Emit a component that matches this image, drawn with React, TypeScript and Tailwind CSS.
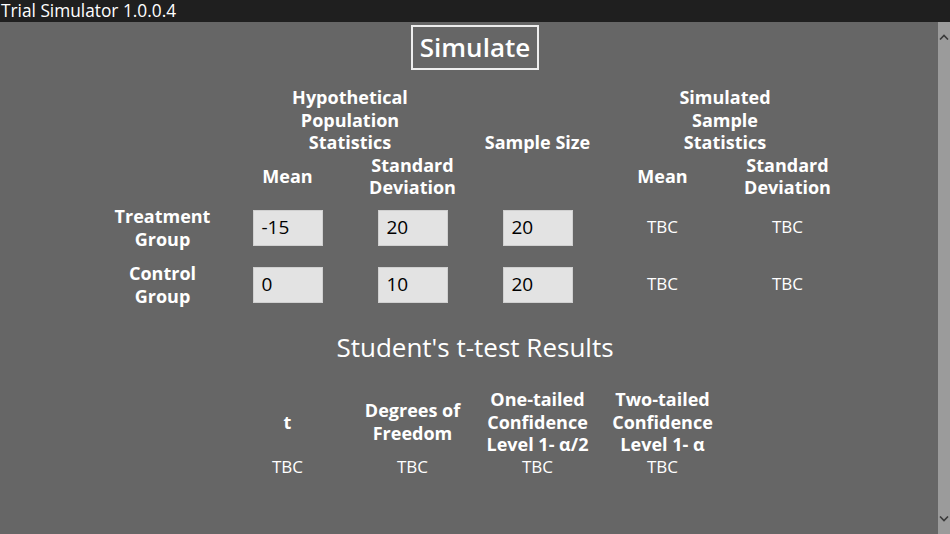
import React from "react";

const font = { fontFamily: '"Open Sans", "Noto Sans", sans-serif' };

function Head({ children, className = "" }: { children: React.ReactNode; className?: string }) {
  return (
    <div className={`flex items-center justify-center text-center text-[18px] font-bold leading-[22.5px] text-white ${className}`}>
      <div>{children}</div>
    </div>
  );
}

function Cell({ children, className = "" }: { children: React.ReactNode; className?: string }) {
  return (
    <div className={`flex items-center justify-center text-center text-[17px] leading-[22.5px] text-white ${className}`}>
      {children}
    </div>
  );
}

function Field({ value }: { value: string }) {
  return (
    <div className="flex items-center justify-center">
      <div className="flex h-[36px] w-[70px] items-center border border-[#d0d0d0] bg-[#e3e3e3] pl-[8px] text-[19px] text-black">
        {value}
      </div>
    </div>
  );
}

export default function App() {
  return (
    <div className="flex h-[534px] w-[950px] flex-col overflow-hidden bg-[#666666]" style={font}>
      <div className="flex h-[22px] items-center bg-[#1f1f1f] pl-[1px] text-[17.3px] leading-[22px] text-white">
        Trial Simulator 1.0.0.4
      </div>
      <div className="flex flex-1">
        <div className="flex flex-1 flex-col items-center pl-[12px]">
          <div className="mt-[3px] flex h-[45px] w-[128px] items-center justify-center border-2 border-[#eeeeee] text-[26px] font-semibold text-white">
            Simulate
          </div>

          <div className="mt-[16px] grid grid-cols-[repeat(6,125px)] grid-rows-[67.5px_45px]">
            <Head className="col-start-2 col-span-2 row-start-1">
              Hypothetical
              <br />
              Population
              <br />
              Statistics
            </Head>
            <Head className="col-start-4 row-start-1 row-span-2">Sample Size</Head>
            <Head className="col-start-5 col-span-2 row-start-1">
              Simulated
              <br />
              Sample
              <br />
              Statistics
            </Head>
            <Head className="col-start-2 row-start-2">Mean</Head>
            <Head className="col-start-3 row-start-2">
              Standard
              <br />
              Deviation
            </Head>
            <Head className="col-start-5 row-start-2">Mean</Head>
            <Head className="col-start-6 row-start-2">
              Standard
              <br />
              Deviation
            </Head>
          </div>

          <div className="mt-[6.5px] grid grid-cols-[repeat(6,125px)] auto-rows-[45px] gap-y-[12px]">
            <Head>
              Treatment
              <br />
              Group
            </Head>
            <Field value="-15" />
            <Field value="20" />
            <Field value="20" />
            <Cell>TBC</Cell>
            <Cell>TBC</Cell>

            <Head>
              Control
              <br />
              Group
            </Head>
            <Field value="0" />
            <Field value="10" />
            <Field value="20" />
            <Cell>TBC</Cell>
            <Cell>TBC</Cell>
          </div>

          <div className="mt-[23px] text-[26px] leading-[34px] text-white">Student's t-test Results</div>

          <div className="mt-[24px] grid grid-cols-[repeat(6,125px)] grid-rows-[67.5px_22.5px]">
            <Head className="col-start-2">t</Head>
            <Head>
              Degrees of
              <br />
              Freedom
            </Head>
            <Head>
              One-tailed
              <br />
              Confidence
              <br />
              Level 1- α/2
            </Head>
            <Head>
              Two-tailed
              <br />
              Confidence
              <br />
              Level 1- α
            </Head>
            <Cell className="col-start-2">TBC</Cell>
            <Cell>TBC</Cell>
            <Cell>TBC</Cell>
            <Cell>TBC</Cell>
          </div>
        </div>

        <div className="flex w-[12px] flex-col items-center justify-between bg-[#9b9b9b] py-[12px]">
          <svg width="10" height="6" viewBox="0 0 10 6">
            <path d="M1 5.5 L5 1.5 L9 5.5" fill="none" stroke="#3a3a3a" strokeWidth="1.6" />
          </svg>
          <svg width="10" height="6" viewBox="0 0 10 6">
            <path d="M1 0.5 L5 4.5 L9 0.5" fill="none" stroke="#3a3a3a" strokeWidth="1.6" />
          </svg>
        </div>
      </div>
    </div>
  );
}
